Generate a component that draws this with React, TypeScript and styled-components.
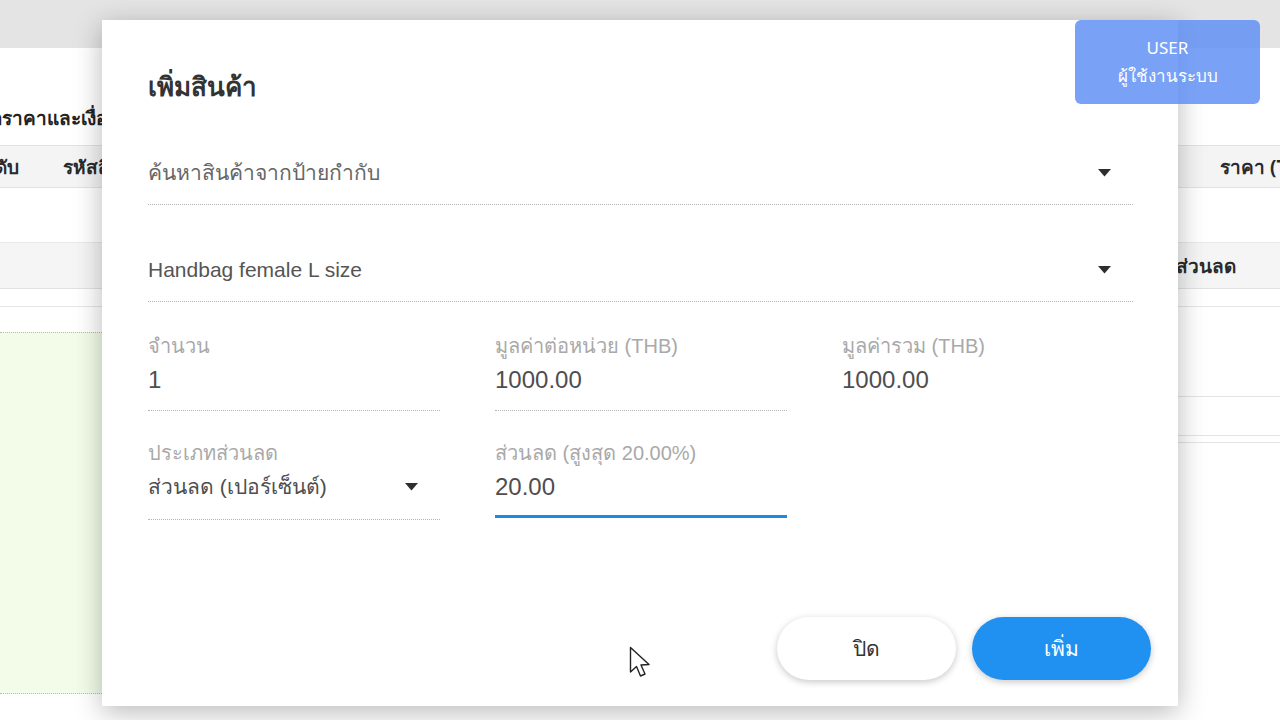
import React from "react";
import styled, { createGlobalStyle } from "styled-components";

const GlobalStyle = createGlobalStyle`
  html, body {
    margin: 0;
    padding: 0;
    width: 1280px;
    height: 720px;
    overflow: hidden;
    background: #ffffff;
    font-family: "Noto Sans", "Liberation Sans", sans-serif;
  }
  * {
    box-sizing: border-box;
  }
`;

const formFont = `"Liberation Sans", "Noto Sans", sans-serif`;

const ArrowDown: React.FC = () => (
  <svg width="13" height="8" viewBox="0 0 13 8">
    <path d="M0 0 L13 0 L6.5 7.5 Z" fill="#2e2e2e" />
  </svg>
);

const Cursor: React.FC = () => (
  <svg width="24" height="36" viewBox="0 0 24 36">
    <path
      d="M1.5 1.5 L1.5 26 L7.5 20.5 L11.5 30 L16 28 L12 19 L20 18.5 Z"
      fill="#ffffff"
      stroke="#222"
      strokeWidth="1.4"
      strokeLinejoin="round"
    />
  </svg>
);

const App: React.FC = () => {
  return (
    <>
      <GlobalStyle />
      <Page>
        <Backdrop>
          <TopBar />
          <SectionTitle>ข้อราคาและเงื่อนไข</SectionTitle>
          <HeaderRow>
            <HeaderCell>ลำดับ</HeaderCell>
            <HeaderCell>รหัสสินค้า</HeaderCell>
            <HeaderSpacer />
            <PriceCell>ราคา (THB)</PriceCell>
          </HeaderRow>
          <BlankRow />
          <SubHeaderRow>
            <HeaderSpacer />
            <SubHeaderCell>ส่วนลด</SubHeaderCell>
          </SubHeaderRow>
          <ThinRow />
          <Body>
            <GreenPanel />
            <RightRows>
              <LineRow $height={90} />
              <LineRow $height={39} />
              <LineRow $height={7} />
            </RightRows>
          </Body>
        </Backdrop>

        <Modal>
          <ModalTitle>เพิ่มสินค้า</ModalTitle>
          <Form>
            <SelectField $top={53}>
              <SelectText>ค้นหาสินค้าจากป้ายกำกับ</SelectText>
              <ArrowDown />
            </SelectField>
            <SelectField $top={50}>
              <SelectText $dark>Handbag female L size</SelectText>
              <ArrowDown />
            </SelectField>

            <FieldGrid>
              <Field>
                <Label>จำนวน</Label>
                <Value>1</Value>
              </Field>
              <Field>
                <Label>มูลค่าต่อหน่วย (THB)</Label>
                <Value>1000.00</Value>
              </Field>
              <Field $plain>
                <Label>มูลค่ารวม (THB)</Label>
                <Value>1000.00</Value>
              </Field>

              <Field $last>
                <Label>ประเภทส่วนลด</Label>
                <ValueRow>
                  <SmallValue>ส่วนลด (เปอร์เซ็นต์)</SmallValue>
                  <ArrowDown />
                </ValueRow>
              </Field>
              <Field $focused>
                <Label>ส่วนลด (สูงสุด 20.00%)</Label>
                <Value>20.00</Value>
              </Field>
            </FieldGrid>
          </Form>

          <Footer>
            <PillButton>ปิด</PillButton>
            <PillButton $primary>เพิ่ม</PillButton>
          </Footer>
        </Modal>

        <UserBadge>
          <span>USER</span>
          <span>ผู้ใช้งานระบบ</span>
        </UserBadge>

        <CursorLayer>
          <Cursor />
        </CursorLayer>
      </Page>
    </>
  );
};

const Page = styled.div`
  position: relative;
  width: 1280px;
  height: 720px;
  overflow: hidden;
  background: #ffffff;
`;

const Backdrop = styled.div`
  display: flex;
  flex-direction: column;
  width: 100%;
  height: 100%;
`;

const TopBar = styled.div`
  height: 48px;
  background: #e4e4e4;
  flex-shrink: 0;
`;

const SectionTitle = styled.div`
  height: 97px;
  padding-top: 57px;
  margin-left: -22px;
  font-size: 19px;
  line-height: 26px;
  font-weight: 700;
  color: #222;
  white-space: nowrap;
`;

const HeaderRow = styled.div`
  display: flex;
  align-items: center;
  height: 43px;
  margin-left: -28px;
  margin-right: -70px;
  background: #f4f4f4;
  border-top: 1px solid #e2e2e2;
  border-bottom: 1px solid #e2e2e2;
  gap: 44px;
`;

const HeaderCell = styled.div`
  font-size: 19px;
  font-weight: 700;
  color: #2a2a2a;
  white-space: nowrap;
`;

const PriceCell = styled(HeaderCell)`
  width: 130px;
`;

const HeaderSpacer = styled.div`
  flex: 1;
`;

const BlankRow = styled.div`
  height: 55px;
  border-bottom: 1px solid #e8e8e8;
`;

const SubHeaderRow = styled.div`
  display: flex;
  align-items: center;
  height: 46px;
  background: #f5f5f5;
  border-bottom: 1px solid #e2e2e2;
  padding-right: 44px;
`;

const SubHeaderCell = styled.div`
  font-size: 19px;
  font-weight: 700;
  color: #2a2a2a;
`;

const ThinRow = styled.div`
  height: 18px;
  border-bottom: 1px solid #e6e6e6;
`;

const Body = styled.div`
  display: grid;
  grid-template-columns: 1fr 1fr;
`;

const GreenPanel = styled.div`
  margin-top: 25px;
  height: 362px;
  background: #f2fce8;
  border-top: 1px dotted #b8b8b8;
  border-bottom: 1px dotted #b8b8b8;
`;

const RightRows = styled.div`
  display: flex;
  flex-direction: column;
`;

const LineRow = styled.div<{ $height: number }>`
  height: ${({ $height }) => $height}px;
  border-bottom: 1px solid #e4e4e4;
`;

const Modal = styled.section`
  position: absolute;
  left: 102px;
  top: 20px;
  width: 1076px;
  height: 686px;
  display: flex;
  flex-direction: column;
  padding: 47px 27px 26px 46px;
  background: #ffffff;
  box-shadow: 0 6px 26px rgba(0, 0, 0, 0.28);
`;

const ModalTitle = styled.h2`
  margin: 0;
  font-size: 26px;
  line-height: 38px;
  font-weight: 700;
  color: #333;
`;

const Form = styled.div`
  display: flex;
  flex-direction: column;
  padding-right: 18px;
  font-family: ${formFont};
`;

const SelectField = styled.div<{ $top: number }>`
  display: flex;
  align-items: center;
  justify-content: space-between;
  margin-top: ${({ $top }) => $top}px;
  padding: 0 22px 16px 0;
  border-bottom: 1px dotted #b4b4b4;
`;

const SelectText = styled.div<{ $dark?: boolean }>`
  font-size: 21px;
  line-height: 30px;
  color: ${({ $dark }) => ($dark ? "#555" : "#666")};
`;

const FieldGrid = styled.div`
  display: grid;
  grid-template-columns: repeat(3, 292px);
  column-gap: 55px;
  row-gap: 29px;
  margin-top: 31px;
`;

const Field = styled.div<{ $focused?: boolean; $plain?: boolean; $last?: boolean }>`
  display: flex;
  flex-direction: column;
  gap: 6px;
  padding-bottom: ${({ $focused, $last }) =>
    $focused ? "13px" : $last ? "17px" : "15px"};
  border-bottom: ${({ $focused, $plain }) =>
    $focused
      ? "3px solid #1e88e5"
      : $plain
        ? "1px solid transparent"
        : "1px dotted #b4b4b4"};
  align-self: start;
`;

const Label = styled.div`
  font-size: 20px;
  line-height: 26px;
  color: #a9a9a9;
  white-space: nowrap;
`;

const Value = styled.div`
  font-size: 24px;
  line-height: 30px;
  color: #4e4e4e;
`;

const ValueRow = styled.div`
  display: flex;
  align-items: center;
  justify-content: space-between;
  height: 30px;
  padding-right: 22px;
`;

const SmallValue = styled.div`
  font-size: 21px;
  line-height: 30px;
  color: #4e4e4e;
`;

const Footer = styled.div`
  display: flex;
  justify-content: flex-end;
  gap: 16px;
  margin-top: auto;
`;

const PillButton = styled.button<{ $primary?: boolean }>`
  width: 179px;
  height: 63px;
  border: none;
  border-radius: 32px;
  font-family: inherit;
  font-size: 21px;
  color: ${({ $primary }) => ($primary ? "#ffffff" : "#333")};
  background: ${({ $primary }) => ($primary ? "#2091f0" : "#ffffff")};
  box-shadow: 0 2px 7px rgba(0, 0, 0, 0.22);
  cursor: pointer;
`;

const UserBadge = styled.div`
  position: absolute;
  left: 1075px;
  top: 20px;
  width: 185px;
  height: 84px;
  display: flex;
  flex-direction: column;
  align-items: center;
  justify-content: center;
  gap: 4px;
  border-radius: 6px;
  background: rgba(98, 146, 245, 0.85);
  color: #ffffff;
  font-size: 17px;
  line-height: 24px;
`;

const CursorLayer = styled.div`
  position: absolute;
  left: 629px;
  top: 646px;
  pointer-events: none;
`;

export default App;
